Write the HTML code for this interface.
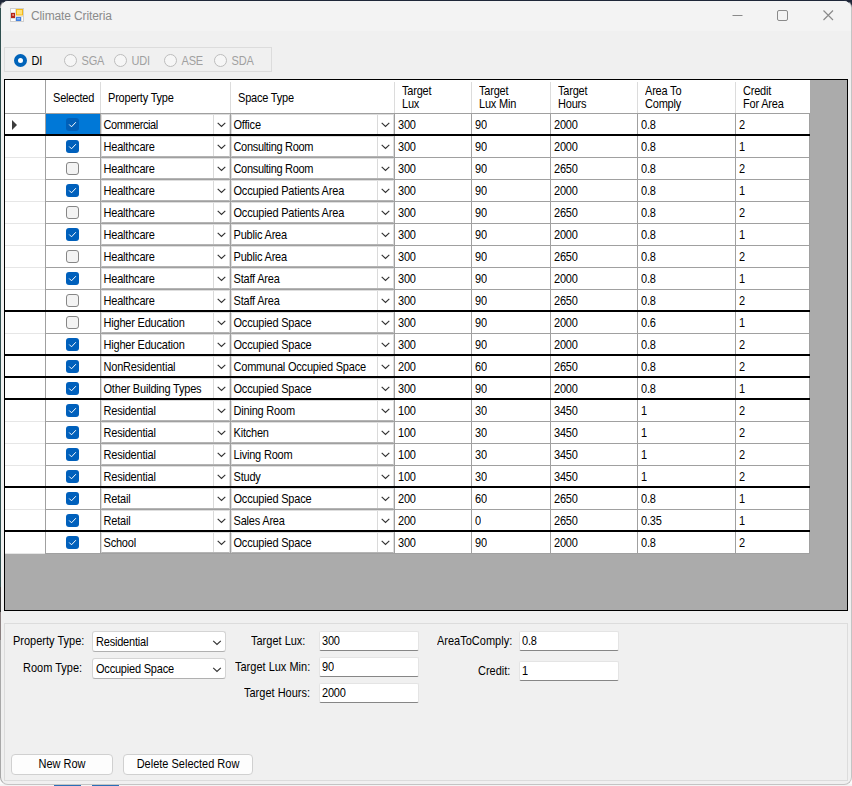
<!DOCTYPE html>
<html lang="en">
<head>
<meta charset="utf-8">
<title>Climate Criteria</title>
<style>
*{box-sizing:border-box;margin:0;padding:0}
html,body{width:852px;height:786px;overflow:hidden}
body{position:relative;background:#fbfbfb;font-family:"Liberation Sans",sans-serif;font-size:11px;color:#000;letter-spacing:-0.2px;line-height:13px}
.abs,.win *{position:absolute}
.desk{position:absolute;left:0;top:0;width:852px;height:14px;background:#1e2638}
.deskl{position:absolute;left:0;top:8px;width:1px;height:770px;background:linear-gradient(#2f4f4f 0,#2f4f4f 579px,#353535 579px,#353535 604px,#8a7f7f 604px,#8a7f7f 632px,#a8a8a8 632px)}
.deskb{position:absolute;left:0;top:784px;width:852px;height:2px;background:#f4f4f4}
.win{position:absolute;left:0;top:0;width:852px;height:785px;background:#f0f0f0;border-radius:8px;overflow:hidden;border:1px solid #c4c4c4;border-top-color:#1e2638;border-left-color:#a8a8a8}
.tb{left:0;top:0;width:850px;height:30px;background:#f3f3f3}
.title{left:30px;top:7px;font-size:12px;line-height:16px;color:#8a8a8a;letter-spacing:-0.12px;white-space:nowrap}
.t,.lbl,.rt,.h1,.h2,.tx,.combo span,.cmb span,.inp span,.btn span{transform:scaleY(1.14);transform-origin:0 10px}
.lbl{white-space:nowrap;line-height:13px;letter-spacing:0}
/* radio panel */
.rp{left:3px;top:46px;width:268px;height:25px;border:1px solid #dcdcdc}
.rd{width:13px;height:13px;border-radius:50%;top:53px}
.rd.on{background:#fff;border:4px solid #0063b9}
.rd.off{background:#f6f6f6;border:1px solid #bdbdbd}
.rt{top:54px;white-space:nowrap}
.rt.dis{color:#a0a0a0}
/* grid */
.grid{left:3px;top:78px;width:844px;height:532px;background:#ababab;border:1px solid #000;overflow:hidden}
.hd{background:#fff}
.h1,.h2{white-space:nowrap;line-height:13px}
.h1,.h2{margin-left:7px}
.hs{top:2px;width:1px;height:31px;background:#dcdcdc}
.hl{height:1px;background:#a0a0a0}
.vs{width:1px;background:#a0a0a0}
.row{left:0;width:805px;height:21px;background:#fff}
.rl{left:41px;width:764px;height:1px;background:#a0a0a0}
.rlh{left:0;width:40px;height:1px;background:#e6e6e6}
.bl{left:0;width:805px;height:2px;background:#000}
.arrow{left:7px;top:6px;width:0;height:0;border-left:5px solid #3c3c3c;border-top:5px solid transparent;border-bottom:5px solid transparent}
.selbg{left:41px;top:0;width:54px;height:20px;background:#0078d7}
.cb{left:61px;top:4px;width:13px;height:13px;border-radius:3px}
.cb.on{background:#0060bc}
.cb.sel{background:#005fb8}
.cb.off{background:#f3f3f3;border:1px solid #868686}
.ck{left:0;top:0;width:13px;height:13px}
.combo{top:0;height:21px;background:#fff;border:1px solid #dedede;border-bottom-color:#b4b4b4}
.combo span{left:1.5px;top:4px;white-space:nowrap;line-height:13px}
.combo i{right:15px;top:0;width:1px;height:19px;background:#dadada}
.cv{right:3.3px;top:7.2px;width:9px;height:6px}
.tx{top:5px;white-space:nowrap;line-height:13px}
/* bottom panel */
.bp{left:3px;top:622px;width:844px;height:158px;border:1px solid #dcdcdc}
.cmb{width:134px;height:21px;background:#fff;border:1px solid #d4d4d4;border-bottom-color:#b0b0b0;border-radius:3px}
.cmb span{left:3px;top:4px;white-space:nowrap;line-height:13px}
.cmb .cv{right:3.5px;top:7.5px;width:10px;height:6px}
.inp{width:100px;height:20px;background:#fff;border:1px solid #e4e4e4;border-bottom-color:#868686;border-radius:2px}
.inp span{left:2px;top:3px;white-space:nowrap;line-height:13px}
.btn{height:21px;background:#fdfdfd;border:1px solid #d0d0d0;border-radius:4px;white-space:nowrap}
.btn span{left:0;right:0;top:3px;letter-spacing:0;text-align:center;line-height:13px}
/* caption buttons */
.cap{stroke:#8a8a8a;fill:none;stroke-width:1}
</style>
</head>
<body>
<div class="desk"></div><div class="deskb"></div>
<div class="win">
  <div class="tb"></div>
  <!-- app icon -->
  <svg style="left:9px;top:7px;width:14px;height:14px" viewBox="0 0 14 14">
    <rect x="0.5" y="0.5" width="13" height="13" fill="#fdfdfd" stroke="#cfcfcf"/>
    <path d="M1 4.5H5M5.5 1V13M1 10.5H5M11.5 8.5V13M6 8.5H13" stroke="#dedede" fill="none"/>
    <rect x="6" y="1" width="7" height="6.5" fill="#f5b915" stroke="none"/>
    <rect x="7" y="2" width="5" height="4.5" fill="#ffe27a" stroke="none"/>
    <rect x="1" y="5" width="4" height="5" fill="#b5261a" stroke="none"/>
    <rect x="2.4" y="6" width="1.4" height="2" fill="#f0a090" stroke="none"/>
    <rect x="6" y="9" width="5" height="4" fill="#3f7fe0" stroke="none"/>
    <rect x="7" y="10" width="3" height="1.5" fill="#8db8f5" stroke="none"/>
  </svg>
  <div class="title">Climate Criteria</div>
  <svg style="left:731px;top:9px;width:12px;height:12px" viewBox="0 0 12 12"><path class="cap" d="M0.5 5.5H10.5"/></svg>
  <svg style="left:776px;top:9px;width:12px;height:12px" viewBox="0 0 12 12"><rect class="cap" x="0.5" y="0.5" width="10" height="10" rx="1.5"/></svg>
  <svg style="left:822px;top:9px;width:12px;height:12px" viewBox="0 0 12 12"><path class="cap" d="M0.5 0.5L10 10M10 0.5L0.5 10" style="stroke-width:1.15"/></svg>

  <div class="rp"></div>
  <div class="rd on" style="left:13px"></div><div class="rt" style="left:30.5px">DI</div>
  <div class="rd off" style="left:63px"></div><div class="rt dis" style="left:80.5px">SGA</div>
  <div class="rd off" style="left:113px"></div><div class="rt dis" style="left:130.5px">UDI</div>
  <div class="rd off" style="left:163px"></div><div class="rt dis" style="left:180.5px">ASE</div>
  <div class="rd off" style="left:213px"></div><div class="rt dis" style="left:230.5px">SDA</div>

  <div class="grid">
<div class="hd" style="left:0;top:0;width:805px;height:33px"></div>
<div class="h1" style="left:41px;top:12px">Selected</div>
<div class="h1" style="left:96px;top:12px">Property Type</div>
<div class="h1" style="left:226px;top:12px">Space Type</div>
<div class="h2" style="left:390px;top:5px">Target</div>
<div class="h2" style="left:390px;top:18px">Lux</div>
<div class="h2" style="left:467px;top:5px">Target</div>
<div class="h2" style="left:467px;top:18px">Lux Min</div>
<div class="h2" style="left:546px;top:5px">Target</div>
<div class="h2" style="left:546px;top:18px">Hours</div>
<div class="h2" style="left:633px;top:5px">Area To</div>
<div class="h2" style="left:633px;top:18px">Comply</div>
<div class="h2" style="left:731px;top:5px">Credit</div>
<div class="h2" style="left:731px;top:18px">For Area</div>
<div class="hs" style="left:95px"></div>
<div class="hs" style="left:225px"></div>
<div class="hs" style="left:389px"></div>
<div class="hs" style="left:466px"></div>
<div class="hs" style="left:545px"></div>
<div class="hs" style="left:632px"></div>
<div class="hs" style="left:730px"></div>
<div class="vs" style="left:40px;top:0;height:33px"></div>
<div class="hl" style="left:0;top:33px;width:805px"></div>
<div class="row" style="top:34px">
<div class="arrow"></div><div class="selbg"></div>
<div class="cb on sel"><svg class="ck" viewBox="0 0 13 13"><path d="M3.5 6.8 L5.5 8.8 L9.6 4.5" fill="none" stroke="#fff" stroke-width="1" stroke-linecap="round" stroke-linejoin="round"/></svg></div>
<div class="combo" style="left:96px;width:129px"><span style="letter-spacing:-0.45px">Commercial</span><i></i><svg class="cv" viewBox="0 0 9 6"><path d="M0.7 0.8 L4.5 4.4 L8.3 0.8" fill="none" stroke="#333" stroke-width="1.15"/></svg></div>
<div class="combo" style="left:226px;width:163px"><span>Office</span><i></i><svg class="cv" viewBox="0 0 9 6"><path d="M0.7 0.8 L4.5 4.4 L8.3 0.8" fill="none" stroke="#333" stroke-width="1.15"/></svg></div>
<div class="tx" style="left:393px">300</div>
<div class="tx" style="left:470px">90</div>
<div class="tx" style="left:549px">2000</div>
<div class="tx" style="left:636px">0.8</div>
<div class="tx" style="left:734px">2</div>
</div>
<div class="bl" style="top:54px"></div>
<div class="row" style="top:56px">
<div class="cb on"><svg class="ck" viewBox="0 0 13 13"><path d="M3.5 6.8 L5.5 8.8 L9.6 4.5" fill="none" stroke="#fff" stroke-width="1" stroke-linecap="round" stroke-linejoin="round"/></svg></div>
<div class="combo" style="left:96px;width:129px"><span>Healthcare</span><i></i><svg class="cv" viewBox="0 0 9 6"><path d="M0.7 0.8 L4.5 4.4 L8.3 0.8" fill="none" stroke="#333" stroke-width="1.15"/></svg></div>
<div class="combo" style="left:226px;width:163px"><span style="letter-spacing:-0.32px">Consulting Room</span><i></i><svg class="cv" viewBox="0 0 9 6"><path d="M0.7 0.8 L4.5 4.4 L8.3 0.8" fill="none" stroke="#333" stroke-width="1.15"/></svg></div>
<div class="tx" style="left:393px">300</div>
<div class="tx" style="left:470px">90</div>
<div class="tx" style="left:549px">2000</div>
<div class="tx" style="left:636px">0.8</div>
<div class="tx" style="left:734px">1</div>
</div>
<div class="rl" style="top:77px"></div>
<div class="rlh" style="top:77px"></div>
<div class="row" style="top:78px">
<div class="cb off"></div>
<div class="combo" style="left:96px;width:129px"><span>Healthcare</span><i></i><svg class="cv" viewBox="0 0 9 6"><path d="M0.7 0.8 L4.5 4.4 L8.3 0.8" fill="none" stroke="#333" stroke-width="1.15"/></svg></div>
<div class="combo" style="left:226px;width:163px"><span style="letter-spacing:-0.32px">Consulting Room</span><i></i><svg class="cv" viewBox="0 0 9 6"><path d="M0.7 0.8 L4.5 4.4 L8.3 0.8" fill="none" stroke="#333" stroke-width="1.15"/></svg></div>
<div class="tx" style="left:393px">300</div>
<div class="tx" style="left:470px">90</div>
<div class="tx" style="left:549px">2650</div>
<div class="tx" style="left:636px">0.8</div>
<div class="tx" style="left:734px">2</div>
</div>
<div class="rl" style="top:99px"></div>
<div class="rlh" style="top:99px"></div>
<div class="row" style="top:100px">
<div class="cb on"><svg class="ck" viewBox="0 0 13 13"><path d="M3.5 6.8 L5.5 8.8 L9.6 4.5" fill="none" stroke="#fff" stroke-width="1" stroke-linecap="round" stroke-linejoin="round"/></svg></div>
<div class="combo" style="left:96px;width:129px"><span>Healthcare</span><i></i><svg class="cv" viewBox="0 0 9 6"><path d="M0.7 0.8 L4.5 4.4 L8.3 0.8" fill="none" stroke="#333" stroke-width="1.15"/></svg></div>
<div class="combo" style="left:226px;width:163px"><span>Occupied Patients Area</span><i></i><svg class="cv" viewBox="0 0 9 6"><path d="M0.7 0.8 L4.5 4.4 L8.3 0.8" fill="none" stroke="#333" stroke-width="1.15"/></svg></div>
<div class="tx" style="left:393px">300</div>
<div class="tx" style="left:470px">90</div>
<div class="tx" style="left:549px">2000</div>
<div class="tx" style="left:636px">0.8</div>
<div class="tx" style="left:734px">1</div>
</div>
<div class="rl" style="top:121px"></div>
<div class="rlh" style="top:121px"></div>
<div class="row" style="top:122px">
<div class="cb off"></div>
<div class="combo" style="left:96px;width:129px"><span>Healthcare</span><i></i><svg class="cv" viewBox="0 0 9 6"><path d="M0.7 0.8 L4.5 4.4 L8.3 0.8" fill="none" stroke="#333" stroke-width="1.15"/></svg></div>
<div class="combo" style="left:226px;width:163px"><span>Occupied Patients Area</span><i></i><svg class="cv" viewBox="0 0 9 6"><path d="M0.7 0.8 L4.5 4.4 L8.3 0.8" fill="none" stroke="#333" stroke-width="1.15"/></svg></div>
<div class="tx" style="left:393px">300</div>
<div class="tx" style="left:470px">90</div>
<div class="tx" style="left:549px">2650</div>
<div class="tx" style="left:636px">0.8</div>
<div class="tx" style="left:734px">2</div>
</div>
<div class="rl" style="top:143px"></div>
<div class="rlh" style="top:143px"></div>
<div class="row" style="top:144px">
<div class="cb on"><svg class="ck" viewBox="0 0 13 13"><path d="M3.5 6.8 L5.5 8.8 L9.6 4.5" fill="none" stroke="#fff" stroke-width="1" stroke-linecap="round" stroke-linejoin="round"/></svg></div>
<div class="combo" style="left:96px;width:129px"><span>Healthcare</span><i></i><svg class="cv" viewBox="0 0 9 6"><path d="M0.7 0.8 L4.5 4.4 L8.3 0.8" fill="none" stroke="#333" stroke-width="1.15"/></svg></div>
<div class="combo" style="left:226px;width:163px"><span>Public Area</span><i></i><svg class="cv" viewBox="0 0 9 6"><path d="M0.7 0.8 L4.5 4.4 L8.3 0.8" fill="none" stroke="#333" stroke-width="1.15"/></svg></div>
<div class="tx" style="left:393px">300</div>
<div class="tx" style="left:470px">90</div>
<div class="tx" style="left:549px">2000</div>
<div class="tx" style="left:636px">0.8</div>
<div class="tx" style="left:734px">1</div>
</div>
<div class="rl" style="top:165px"></div>
<div class="rlh" style="top:165px"></div>
<div class="row" style="top:166px">
<div class="cb off"></div>
<div class="combo" style="left:96px;width:129px"><span>Healthcare</span><i></i><svg class="cv" viewBox="0 0 9 6"><path d="M0.7 0.8 L4.5 4.4 L8.3 0.8" fill="none" stroke="#333" stroke-width="1.15"/></svg></div>
<div class="combo" style="left:226px;width:163px"><span>Public Area</span><i></i><svg class="cv" viewBox="0 0 9 6"><path d="M0.7 0.8 L4.5 4.4 L8.3 0.8" fill="none" stroke="#333" stroke-width="1.15"/></svg></div>
<div class="tx" style="left:393px">300</div>
<div class="tx" style="left:470px">90</div>
<div class="tx" style="left:549px">2650</div>
<div class="tx" style="left:636px">0.8</div>
<div class="tx" style="left:734px">2</div>
</div>
<div class="rl" style="top:187px"></div>
<div class="rlh" style="top:187px"></div>
<div class="row" style="top:188px">
<div class="cb on"><svg class="ck" viewBox="0 0 13 13"><path d="M3.5 6.8 L5.5 8.8 L9.6 4.5" fill="none" stroke="#fff" stroke-width="1" stroke-linecap="round" stroke-linejoin="round"/></svg></div>
<div class="combo" style="left:96px;width:129px"><span>Healthcare</span><i></i><svg class="cv" viewBox="0 0 9 6"><path d="M0.7 0.8 L4.5 4.4 L8.3 0.8" fill="none" stroke="#333" stroke-width="1.15"/></svg></div>
<div class="combo" style="left:226px;width:163px"><span>Staff Area</span><i></i><svg class="cv" viewBox="0 0 9 6"><path d="M0.7 0.8 L4.5 4.4 L8.3 0.8" fill="none" stroke="#333" stroke-width="1.15"/></svg></div>
<div class="tx" style="left:393px">300</div>
<div class="tx" style="left:470px">90</div>
<div class="tx" style="left:549px">2000</div>
<div class="tx" style="left:636px">0.8</div>
<div class="tx" style="left:734px">1</div>
</div>
<div class="rl" style="top:209px"></div>
<div class="rlh" style="top:209px"></div>
<div class="row" style="top:210px">
<div class="cb off"></div>
<div class="combo" style="left:96px;width:129px"><span>Healthcare</span><i></i><svg class="cv" viewBox="0 0 9 6"><path d="M0.7 0.8 L4.5 4.4 L8.3 0.8" fill="none" stroke="#333" stroke-width="1.15"/></svg></div>
<div class="combo" style="left:226px;width:163px"><span>Staff Area</span><i></i><svg class="cv" viewBox="0 0 9 6"><path d="M0.7 0.8 L4.5 4.4 L8.3 0.8" fill="none" stroke="#333" stroke-width="1.15"/></svg></div>
<div class="tx" style="left:393px">300</div>
<div class="tx" style="left:470px">90</div>
<div class="tx" style="left:549px">2650</div>
<div class="tx" style="left:636px">0.8</div>
<div class="tx" style="left:734px">2</div>
</div>
<div class="bl" style="top:230px"></div>
<div class="row" style="top:232px">
<div class="cb off"></div>
<div class="combo" style="left:96px;width:129px"><span>Higher Education</span><i></i><svg class="cv" viewBox="0 0 9 6"><path d="M0.7 0.8 L4.5 4.4 L8.3 0.8" fill="none" stroke="#333" stroke-width="1.15"/></svg></div>
<div class="combo" style="left:226px;width:163px"><span>Occupied Space</span><i></i><svg class="cv" viewBox="0 0 9 6"><path d="M0.7 0.8 L4.5 4.4 L8.3 0.8" fill="none" stroke="#333" stroke-width="1.15"/></svg></div>
<div class="tx" style="left:393px">300</div>
<div class="tx" style="left:470px">90</div>
<div class="tx" style="left:549px">2000</div>
<div class="tx" style="left:636px">0.6</div>
<div class="tx" style="left:734px">1</div>
</div>
<div class="rl" style="top:253px"></div>
<div class="rlh" style="top:253px"></div>
<div class="row" style="top:254px">
<div class="cb on"><svg class="ck" viewBox="0 0 13 13"><path d="M3.5 6.8 L5.5 8.8 L9.6 4.5" fill="none" stroke="#fff" stroke-width="1" stroke-linecap="round" stroke-linejoin="round"/></svg></div>
<div class="combo" style="left:96px;width:129px"><span>Higher Education</span><i></i><svg class="cv" viewBox="0 0 9 6"><path d="M0.7 0.8 L4.5 4.4 L8.3 0.8" fill="none" stroke="#333" stroke-width="1.15"/></svg></div>
<div class="combo" style="left:226px;width:163px"><span>Occupied Space</span><i></i><svg class="cv" viewBox="0 0 9 6"><path d="M0.7 0.8 L4.5 4.4 L8.3 0.8" fill="none" stroke="#333" stroke-width="1.15"/></svg></div>
<div class="tx" style="left:393px">300</div>
<div class="tx" style="left:470px">90</div>
<div class="tx" style="left:549px">2000</div>
<div class="tx" style="left:636px">0.8</div>
<div class="tx" style="left:734px">2</div>
</div>
<div class="bl" style="top:274px"></div>
<div class="row" style="top:276px">
<div class="cb on"><svg class="ck" viewBox="0 0 13 13"><path d="M3.5 6.8 L5.5 8.8 L9.6 4.5" fill="none" stroke="#fff" stroke-width="1" stroke-linecap="round" stroke-linejoin="round"/></svg></div>
<div class="combo" style="left:96px;width:129px"><span>NonResidential</span><i></i><svg class="cv" viewBox="0 0 9 6"><path d="M0.7 0.8 L4.5 4.4 L8.3 0.8" fill="none" stroke="#333" stroke-width="1.15"/></svg></div>
<div class="combo" style="left:226px;width:163px"><span>Communal Occupied Space</span><i></i><svg class="cv" viewBox="0 0 9 6"><path d="M0.7 0.8 L4.5 4.4 L8.3 0.8" fill="none" stroke="#333" stroke-width="1.15"/></svg></div>
<div class="tx" style="left:393px">200</div>
<div class="tx" style="left:470px">60</div>
<div class="tx" style="left:549px">2650</div>
<div class="tx" style="left:636px">0.8</div>
<div class="tx" style="left:734px">2</div>
</div>
<div class="bl" style="top:296px"></div>
<div class="row" style="top:298px">
<div class="cb on"><svg class="ck" viewBox="0 0 13 13"><path d="M3.5 6.8 L5.5 8.8 L9.6 4.5" fill="none" stroke="#fff" stroke-width="1" stroke-linecap="round" stroke-linejoin="round"/></svg></div>
<div class="combo" style="left:96px;width:129px"><span>Other Building Types</span><i></i><svg class="cv" viewBox="0 0 9 6"><path d="M0.7 0.8 L4.5 4.4 L8.3 0.8" fill="none" stroke="#333" stroke-width="1.15"/></svg></div>
<div class="combo" style="left:226px;width:163px"><span>Occupied Space</span><i></i><svg class="cv" viewBox="0 0 9 6"><path d="M0.7 0.8 L4.5 4.4 L8.3 0.8" fill="none" stroke="#333" stroke-width="1.15"/></svg></div>
<div class="tx" style="left:393px">300</div>
<div class="tx" style="left:470px">90</div>
<div class="tx" style="left:549px">2000</div>
<div class="tx" style="left:636px">0.8</div>
<div class="tx" style="left:734px">1</div>
</div>
<div class="bl" style="top:318px"></div>
<div class="row" style="top:320px">
<div class="cb on"><svg class="ck" viewBox="0 0 13 13"><path d="M3.5 6.8 L5.5 8.8 L9.6 4.5" fill="none" stroke="#fff" stroke-width="1" stroke-linecap="round" stroke-linejoin="round"/></svg></div>
<div class="combo" style="left:96px;width:129px"><span>Residential</span><i></i><svg class="cv" viewBox="0 0 9 6"><path d="M0.7 0.8 L4.5 4.4 L8.3 0.8" fill="none" stroke="#333" stroke-width="1.15"/></svg></div>
<div class="combo" style="left:226px;width:163px"><span>Dining Room</span><i></i><svg class="cv" viewBox="0 0 9 6"><path d="M0.7 0.8 L4.5 4.4 L8.3 0.8" fill="none" stroke="#333" stroke-width="1.15"/></svg></div>
<div class="tx" style="left:393px">100</div>
<div class="tx" style="left:470px">30</div>
<div class="tx" style="left:549px">3450</div>
<div class="tx" style="left:636px">1</div>
<div class="tx" style="left:734px">2</div>
</div>
<div class="rl" style="top:341px"></div>
<div class="rlh" style="top:341px"></div>
<div class="row" style="top:342px">
<div class="cb on"><svg class="ck" viewBox="0 0 13 13"><path d="M3.5 6.8 L5.5 8.8 L9.6 4.5" fill="none" stroke="#fff" stroke-width="1" stroke-linecap="round" stroke-linejoin="round"/></svg></div>
<div class="combo" style="left:96px;width:129px"><span>Residential</span><i></i><svg class="cv" viewBox="0 0 9 6"><path d="M0.7 0.8 L4.5 4.4 L8.3 0.8" fill="none" stroke="#333" stroke-width="1.15"/></svg></div>
<div class="combo" style="left:226px;width:163px"><span>Kitchen</span><i></i><svg class="cv" viewBox="0 0 9 6"><path d="M0.7 0.8 L4.5 4.4 L8.3 0.8" fill="none" stroke="#333" stroke-width="1.15"/></svg></div>
<div class="tx" style="left:393px">100</div>
<div class="tx" style="left:470px">30</div>
<div class="tx" style="left:549px">3450</div>
<div class="tx" style="left:636px">1</div>
<div class="tx" style="left:734px">2</div>
</div>
<div class="rl" style="top:363px"></div>
<div class="rlh" style="top:363px"></div>
<div class="row" style="top:364px">
<div class="cb on"><svg class="ck" viewBox="0 0 13 13"><path d="M3.5 6.8 L5.5 8.8 L9.6 4.5" fill="none" stroke="#fff" stroke-width="1" stroke-linecap="round" stroke-linejoin="round"/></svg></div>
<div class="combo" style="left:96px;width:129px"><span>Residential</span><i></i><svg class="cv" viewBox="0 0 9 6"><path d="M0.7 0.8 L4.5 4.4 L8.3 0.8" fill="none" stroke="#333" stroke-width="1.15"/></svg></div>
<div class="combo" style="left:226px;width:163px"><span>Living Room</span><i></i><svg class="cv" viewBox="0 0 9 6"><path d="M0.7 0.8 L4.5 4.4 L8.3 0.8" fill="none" stroke="#333" stroke-width="1.15"/></svg></div>
<div class="tx" style="left:393px">100</div>
<div class="tx" style="left:470px">30</div>
<div class="tx" style="left:549px">3450</div>
<div class="tx" style="left:636px">1</div>
<div class="tx" style="left:734px">2</div>
</div>
<div class="rl" style="top:385px"></div>
<div class="rlh" style="top:385px"></div>
<div class="row" style="top:386px">
<div class="cb on"><svg class="ck" viewBox="0 0 13 13"><path d="M3.5 6.8 L5.5 8.8 L9.6 4.5" fill="none" stroke="#fff" stroke-width="1" stroke-linecap="round" stroke-linejoin="round"/></svg></div>
<div class="combo" style="left:96px;width:129px"><span>Residential</span><i></i><svg class="cv" viewBox="0 0 9 6"><path d="M0.7 0.8 L4.5 4.4 L8.3 0.8" fill="none" stroke="#333" stroke-width="1.15"/></svg></div>
<div class="combo" style="left:226px;width:163px"><span>Study</span><i></i><svg class="cv" viewBox="0 0 9 6"><path d="M0.7 0.8 L4.5 4.4 L8.3 0.8" fill="none" stroke="#333" stroke-width="1.15"/></svg></div>
<div class="tx" style="left:393px">100</div>
<div class="tx" style="left:470px">30</div>
<div class="tx" style="left:549px">3450</div>
<div class="tx" style="left:636px">1</div>
<div class="tx" style="left:734px">2</div>
</div>
<div class="bl" style="top:406px"></div>
<div class="row" style="top:408px">
<div class="cb on"><svg class="ck" viewBox="0 0 13 13"><path d="M3.5 6.8 L5.5 8.8 L9.6 4.5" fill="none" stroke="#fff" stroke-width="1" stroke-linecap="round" stroke-linejoin="round"/></svg></div>
<div class="combo" style="left:96px;width:129px"><span>Retail</span><i></i><svg class="cv" viewBox="0 0 9 6"><path d="M0.7 0.8 L4.5 4.4 L8.3 0.8" fill="none" stroke="#333" stroke-width="1.15"/></svg></div>
<div class="combo" style="left:226px;width:163px"><span>Occupied Space</span><i></i><svg class="cv" viewBox="0 0 9 6"><path d="M0.7 0.8 L4.5 4.4 L8.3 0.8" fill="none" stroke="#333" stroke-width="1.15"/></svg></div>
<div class="tx" style="left:393px">200</div>
<div class="tx" style="left:470px">60</div>
<div class="tx" style="left:549px">2650</div>
<div class="tx" style="left:636px">0.8</div>
<div class="tx" style="left:734px">1</div>
</div>
<div class="rl" style="top:429px"></div>
<div class="rlh" style="top:429px"></div>
<div class="row" style="top:430px">
<div class="cb on"><svg class="ck" viewBox="0 0 13 13"><path d="M3.5 6.8 L5.5 8.8 L9.6 4.5" fill="none" stroke="#fff" stroke-width="1" stroke-linecap="round" stroke-linejoin="round"/></svg></div>
<div class="combo" style="left:96px;width:129px"><span>Retail</span><i></i><svg class="cv" viewBox="0 0 9 6"><path d="M0.7 0.8 L4.5 4.4 L8.3 0.8" fill="none" stroke="#333" stroke-width="1.15"/></svg></div>
<div class="combo" style="left:226px;width:163px"><span>Sales Area</span><i></i><svg class="cv" viewBox="0 0 9 6"><path d="M0.7 0.8 L4.5 4.4 L8.3 0.8" fill="none" stroke="#333" stroke-width="1.15"/></svg></div>
<div class="tx" style="left:393px">200</div>
<div class="tx" style="left:470px">0</div>
<div class="tx" style="left:549px">2650</div>
<div class="tx" style="left:636px">0.35</div>
<div class="tx" style="left:734px">1</div>
</div>
<div class="bl" style="top:450px"></div>
<div class="row" style="top:452px">
<div class="cb on"><svg class="ck" viewBox="0 0 13 13"><path d="M3.5 6.8 L5.5 8.8 L9.6 4.5" fill="none" stroke="#fff" stroke-width="1" stroke-linecap="round" stroke-linejoin="round"/></svg></div>
<div class="combo" style="left:96px;width:129px"><span>School</span><i></i><svg class="cv" viewBox="0 0 9 6"><path d="M0.7 0.8 L4.5 4.4 L8.3 0.8" fill="none" stroke="#333" stroke-width="1.15"/></svg></div>
<div class="combo" style="left:226px;width:163px"><span>Occupied Space</span><i></i><svg class="cv" viewBox="0 0 9 6"><path d="M0.7 0.8 L4.5 4.4 L8.3 0.8" fill="none" stroke="#333" stroke-width="1.15"/></svg></div>
<div class="tx" style="left:393px">300</div>
<div class="tx" style="left:470px">90</div>
<div class="tx" style="left:549px">2000</div>
<div class="tx" style="left:636px">0.8</div>
<div class="tx" style="left:734px">2</div>
</div>
<div class="rl" style="top:473px"></div>
<div class="rlh" style="top:473px"></div>
<div class="vs" style="left:40px;top:34px;height:440px"></div>
<div class="vs" style="left:95px;top:34px;height:440px"></div>
<div class="vs" style="left:225px;top:34px;height:440px"></div>
<div class="vs" style="left:389px;top:34px;height:440px"></div>
<div class="vs" style="left:466px;top:34px;height:440px"></div>
<div class="vs" style="left:545px;top:34px;height:440px"></div>
<div class="vs" style="left:632px;top:34px;height:440px"></div>
<div class="vs" style="left:730px;top:34px;height:440px"></div>
<div class="vs" style="left:804px;top:34px;height:440px"></div>
<div class="bl" style="top:54px"></div>
<div class="bl" style="top:230px"></div>
<div class="bl" style="top:274px"></div>
<div class="bl" style="top:296px"></div>
<div class="bl" style="top:318px"></div>
<div class="bl" style="top:406px"></div>
<div class="bl" style="top:450px"></div>
  </div>

  <div class="bp"></div>
  <div class="lbl" style="left:12px;top:634px">Property Type:</div>
  <div class="lbl" style="left:22px;top:661px">Room Type:</div>
  <div class="cmb" style="left:91px;top:630px"><span>Residential</span><svg class="cv" viewBox="0 0 9 6"><path d="M0.7 0.8 L4.5 4.4 L8.3 0.8" fill="none" stroke="#333" stroke-width="1.15"/></svg></div>
  <div class="cmb" style="left:91px;top:657px"><span>Occupied Space</span><svg class="cv" viewBox="0 0 9 6"><path d="M0.7 0.8 L4.5 4.4 L8.3 0.8" fill="none" stroke="#333" stroke-width="1.15"/></svg></div>

  <div class="lbl" style="left:250px;top:634px">Target Lux:</div>
  <div class="lbl" style="left:234px;top:660px">Target Lux Min:</div>
  <div class="lbl" style="left:243px;top:686px">Target Hours:</div>
  <div class="inp" style="left:318px;top:630px"><span>300</span></div>
  <div class="inp" style="left:318px;top:656px"><span>90</span></div>
  <div class="inp" style="left:318px;top:682px"><span>2000</span></div>

  <div class="lbl" style="left:436px;top:634px">AreaToComply:</div>
  <div class="lbl" style="left:477px;top:664px">Credit:</div>
  <div class="inp" style="left:518px;top:630px"><span>0.8</span></div>
  <div class="inp" style="left:518px;top:660px"><span>1</span></div>

  <div class="btn" style="left:10px;top:753px;width:102px"><span>New Row</span></div>
  <div class="btn" style="left:122px;top:753px;width:130px"><span>Delete Selected Row</span></div>
</div>
<div class="deskl"></div>
<div style="position:absolute;left:54px;top:785px;width:27px;height:1px;background:#2a6fb8"></div><div style="position:absolute;left:92px;top:785px;width:27px;height:1px;background:#2a6fb8"></div>
</body>
</html>
